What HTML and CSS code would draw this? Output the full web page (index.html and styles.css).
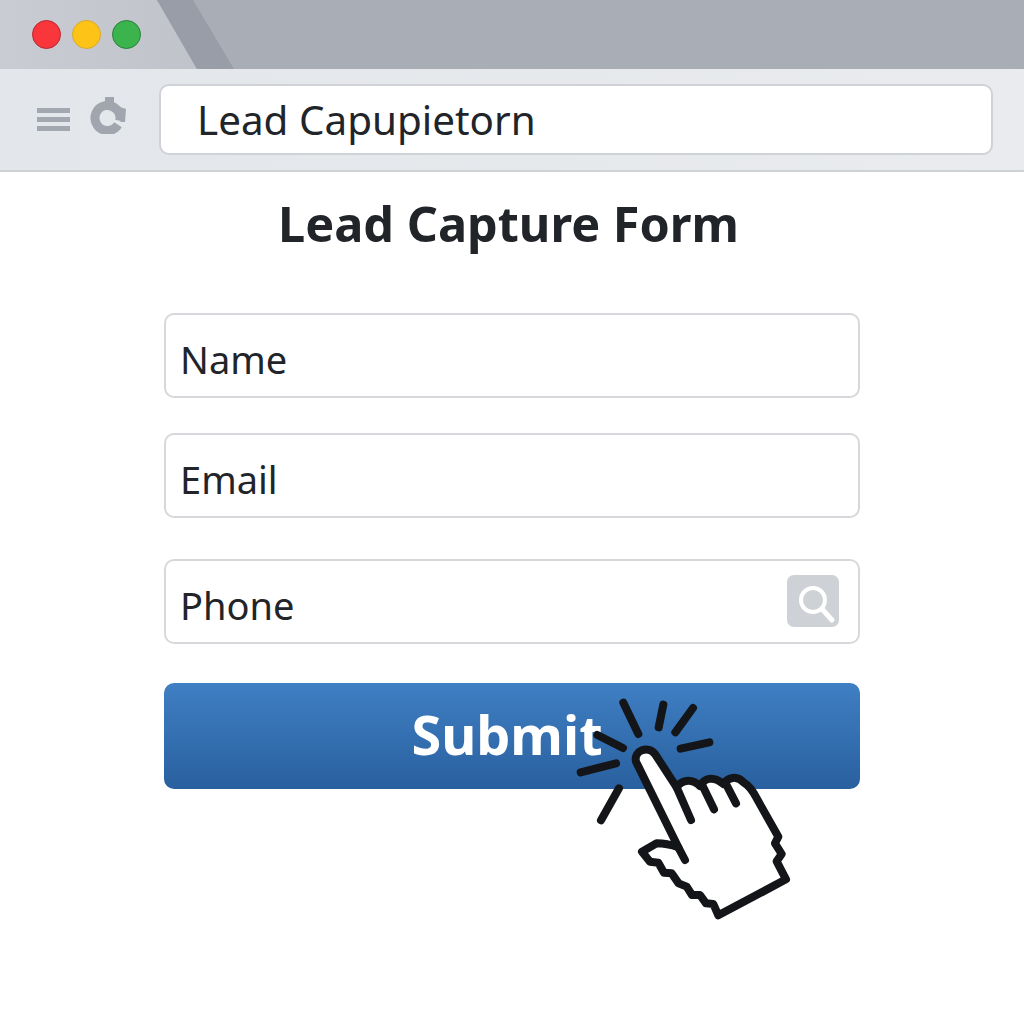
FILE: index.html
```html
<!DOCTYPE html>
<html lang="en">
<head>
  <meta charset="UTF-8">
  <title>Lead Capture Form</title>
  <link rel="stylesheet" href="styles.css">
</head>
<body>

<div class="browser">
  <!-- Tab strip -->
  <div class="tabbar">
    <svg class="tab-shape" viewBox="0 0 240 69" aria-hidden="true">
      <defs>
        <linearGradient id="tabFill" x1="0" y1="0" x2="1" y2="0">
          <stop offset="0" stop-color="#c9ccd2"/>
          <stop offset="1" stop-color="#c0c3ca"/>
        </linearGradient>
      </defs>
      <polygon points="0,0 157,0 197,69 0,69" fill="url(#tabFill)"/>
      <polygon points="157,0 193,0 234,69 197,69" fill="#989da7"/>
    </svg>
    <div class="dots">
      <span class="dot red"></span>
      <span class="dot yellow"></span>
      <span class="dot green"></span>
    </div>
  </div>

  <!-- Toolbar -->
  <div class="toolbar">
    <div class="menu-icon"><span></span><span></span><span></span></div>
    <svg class="reload-icon" viewBox="0 0 38 38" aria-hidden="true">
      <path d="M29 28.8A12.5 12.5 0 1 1 30.7 24.8" fill="none" stroke="#a1a5ae" stroke-width="9"/>
      <rect x="16" y="1" width="9" height="5" fill="#a1a5ae"/>
      <path d="M31 11L37 13L36 26L31.5 26Z" fill="#a1a5ae"/>
    </svg>
    <div class="address">Lead Capupietorn</div>
  </div>

  <!-- Page -->
  <div class="page">
    <h1>Lead Capture Form</h1>
    <form class="form">
      <div class="field">Name</div>
      <div class="field field-email">Email</div>
      <div class="field field-phone">
        Phone
        <span class="lookup">
          <svg viewBox="0 0 52 52" aria-hidden="true">
            <circle cx="26" cy="25" r="12" fill="none" stroke="#fff" stroke-width="4"/>
            <path d="M35 34L45 45" stroke="#fff" stroke-width="5" stroke-linecap="round"/>
          </svg>
        </span>
      </div>
      <div class="submit">Submit</div>
    </form>
  </div>

  <svg class="cursor" viewBox="0 0 750 750" aria-hidden="true">
    <g fill="none" stroke="#131518" stroke-width="24" stroke-linecap="round" stroke-linejoin="round">
      <path d="M190 68L235 162M310 74L296 142M399 84L346 157M448 187L362 206M112 165L189 204M168 250L62 277M177 325L123 421"/>
      <path fill="#fff" d="M228 245C220 212 265 195 285 222L350 322C362 302 392 292 420 318C432 296 458 285 490 312C505 292 530 285 552 308C570 318 580 335 590 355L655 470L645 490L665 522L650 544L678 598L475 706L460 672L438 670L420 645L396 645L380 620L356 610L335 580L312 578L295 548L270 545L246 515L290 490C310 490 335 495 355 502Z"/>
      <path d="M355 502L375 540M350 322L393 420M428 318L462 388M497 310L528 370"/>
    </g>
  </svg>
</div>

</body>
</html>
```

FILE: styles.css
```css
* {
  box-sizing: border-box;
}

body {
  margin: 0;
  background: #fff;
  color: #212429;
  font-family: "Noto Sans", "Open Sans", sans-serif;
}

.browser {
  position: relative;
  width: 1024px;
  height: 1024px;
  overflow: hidden;
}

.tabbar {
  position: relative;
  height: 69px;
  padding: 20px 0 0 32px;
  background: #a8adb6;
}

.tab-shape {
  position: absolute;
  left: 0;
  top: 0;
  width: 240px;
  height: 69px;
}

.dots {
  position: relative;
  display: flex;
  gap: 11px;
}

.dot {
  width: 29px;
  height: 29px;
  border-radius: 50%;
  border: 1.5px solid;
}

.red {
  background: #f9363c;
  border-color: #b8262d;
}

.yellow {
  background: #fdc316;
  border-color: #dba92a;
}

.green {
  background: #3cb44e;
  border-color: #2a7f3c;
}

.toolbar {
  display: flex;
  align-items: center;
  height: 103px;
  padding: 0 31px 1px 37px;
  background: linear-gradient(90deg, #e3e6ea, #e9ebee);
  border-bottom: 2px solid #cfd1d5;
}

.menu-icon {
  display: flex;
  flex-direction: column;
  gap: 4px;
  width: 33px;
}

.menu-icon span {
  height: 5px;
  background: #a3a7af;
}

.reload-icon {
  width: 38px;
  height: 38px;
  margin-left: 19px;
  margin-top: -8px;
}

.address {
  flex: 1;
  height: 71px;
  margin-left: 32px;
  padding-left: 36px;
  background: #fff;
  border: 2px solid #cfd2d7;
  border-radius: 10px;
  font-size: 40.4px;
  line-height: 67px;
}

.page {
  padding-top: 19px;
}

h1 {
  margin: 0;
  padding-right: 7px;
  text-align: center;
  font-size: 48.6px;
  line-height: 64px;
  font-weight: 700;
}

.form {
  width: 696px;
  margin: 58px 0 0 164px;
}

.field {
  display: flex;
  align-items: center;
  justify-content: space-between;
  height: 85px;
  padding: 6px 19px 0 14px;
  background: #fff;
  border: 2px solid #d6d8dc;
  border-radius: 10px;
  font-size: 38px;
}

.field-email {
  margin-top: 35px;
}

.field-phone {
  margin-top: 41px;
}

.lookup {
  width: 52px;
  height: 52px;
  margin-top: -7px;
  background: #ced1d6;
  border-radius: 7px;
}

.lookup svg {
  display: block;
}

.submit {
  height: 106px;
  margin-top: 39px;
  padding-right: 10px;
  background: linear-gradient(180deg, #3f7fc3 0%, #29609f 100%);
  border-radius: 10px;
  color: #fff;
  text-align: center;
  font-size: 54px;
  font-weight: 700;
  line-height: 102px;
}

.cursor {
  position: absolute;
  left: 560px;
  top: 680px;
  width: 250px;
  height: 250px;
}
```
